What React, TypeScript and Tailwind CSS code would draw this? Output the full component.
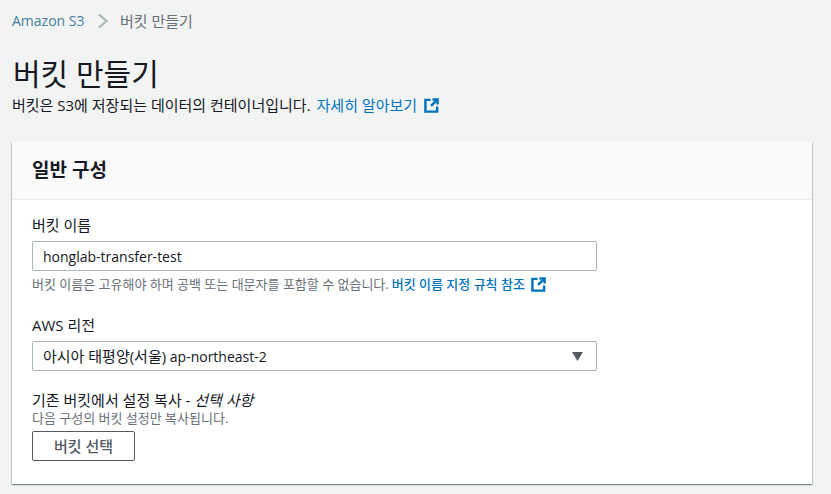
import React from 'react';

const font = "font-['Open_Sans','Noto_Sans_CJK_KR',sans-serif]";

const ExternalIcon = () => (
  <svg viewBox="0 0 16 16" className="h-[15px] w-[15px] shrink-0" fill="none" stroke="#0073bb" strokeWidth="2.6">
    <path d="M7 2H1.5v12.5H14V9" />
    <path d="M9 1.5h5.5V7" />
    <path d="M14 2L7.5 8.5" />
  </svg>
);

const App: React.FC = () => {
  return (
    <div className={`${font} h-[494px] w-[831px] overflow-hidden bg-[#f2f3f3] text-[#16191f]`}>
      <div className="px-3">
        {/* breadcrumb */}
        <nav className="mt-[14px] flex h-[14px] items-center text-[14px] leading-[14px]">
          <a className="w-[72px] whitespace-nowrap text-[#44809f]">Amazon S3</a>
          <svg viewBox="0 0 12 16" className="ml-[13px] h-[16px] w-[12px]" fill="none" stroke="#aab7b8" strokeWidth="2.2">
            <path d="M2 1.5l7.5 6.5-7.5 6.5" />
          </svg>
          <span className="ml-[11px] text-[15px] text-[#687078]">버킷 만들기</span>
        </nav>

        {/* page title */}
        <h1 className="mt-[28px] pl-[1px] text-[30px] font-normal leading-[36px]">버킷 만들기</h1>
        <p className="mt-[3px] flex items-center text-[15px] leading-[20px]">
          <span>버킷은 S3에 저장되는 데이터의 컨테이너입니다.</span>
          <a className="ml-[6px] text-[#0073bb]">자세히 알아보기</a>
          <span className="ml-[7px]"><ExternalIcon /></span>
        </p>

        {/* card */}
        <section className="mt-[27px] h-[342px] w-[800px] bg-white shadow-[0_1px_1px_0_rgba(0,28,36,0.3),1px_1px_1px_0_rgba(0,28,36,0.15),-1px_1px_1px_0_rgba(0,28,36,0.15)]">
          <div className="flex h-[58px] items-center border-b border-[#eaeded] bg-[#fafafa] px-5 pb-[2px]">
            <h2 className="text-[19px] font-bold leading-[22px]">일반 구성</h2>
          </div>

          <div className="px-5 pt-[15px]">
            <label className="block text-[15px] leading-[20px]">버킷 이름</label>
            <input
              readOnly
              value="honglab-transfer-test"
              className="mt-[6px] block h-[30px] w-[565px] rounded-[2px] border border-[#aab7b8] bg-white px-[10px] text-[14px] text-[#16191f] outline-none"
            />
            <p className="mt-[4px] flex items-center text-[13px] leading-[18px] text-[#687078]">
              <span>버킷 이름은 고유해야 하며 공백 또는 대문자를 포함할 수 없습니다.</span>
              <a className="ml-[3px] font-medium text-[#0073bb]">버킷 이름 지정 규칙 참조</a>
              <span className="ml-[6px]"><ExternalIcon /></span>
            </p>

            <label className="mt-[22px] block text-[15px] leading-[20px]">AWS 리전</label>
            <div className="mt-[6px] flex h-[30px] w-[565px] items-center justify-between rounded-[2px] border border-[#aab7b8] bg-white pl-[10px] pr-[13px] text-[14px]">
              <span><span className="text-[15px]">아시아 태평양(서울)</span> ap-northeast-2</span>
              <svg viewBox="0 0 11 9" className="h-[9px] w-[11px]" fill="#545b64">
                <path d="M0 0h11L5.5 9z" />
              </svg>
            </div>

            <label className="mt-[20px] block text-[15px] leading-[18px]">
              기존 버킷에서 설정 복사 - <i>선택 사항</i>
            </label>
            <p className="text-[13px] leading-[18px] text-[#687078]">다음 구성의 버킷 설정만 복사됩니다.</p>
            <button className="mt-[4px] h-[30px] w-[103px] rounded-[2px] border border-[#545b64] bg-white text-[15px] font-medium text-[#545b64]">
              버킷 선택
            </button>
          </div>
        </section>
      </div>
    </div>
  );
};

export default App;
